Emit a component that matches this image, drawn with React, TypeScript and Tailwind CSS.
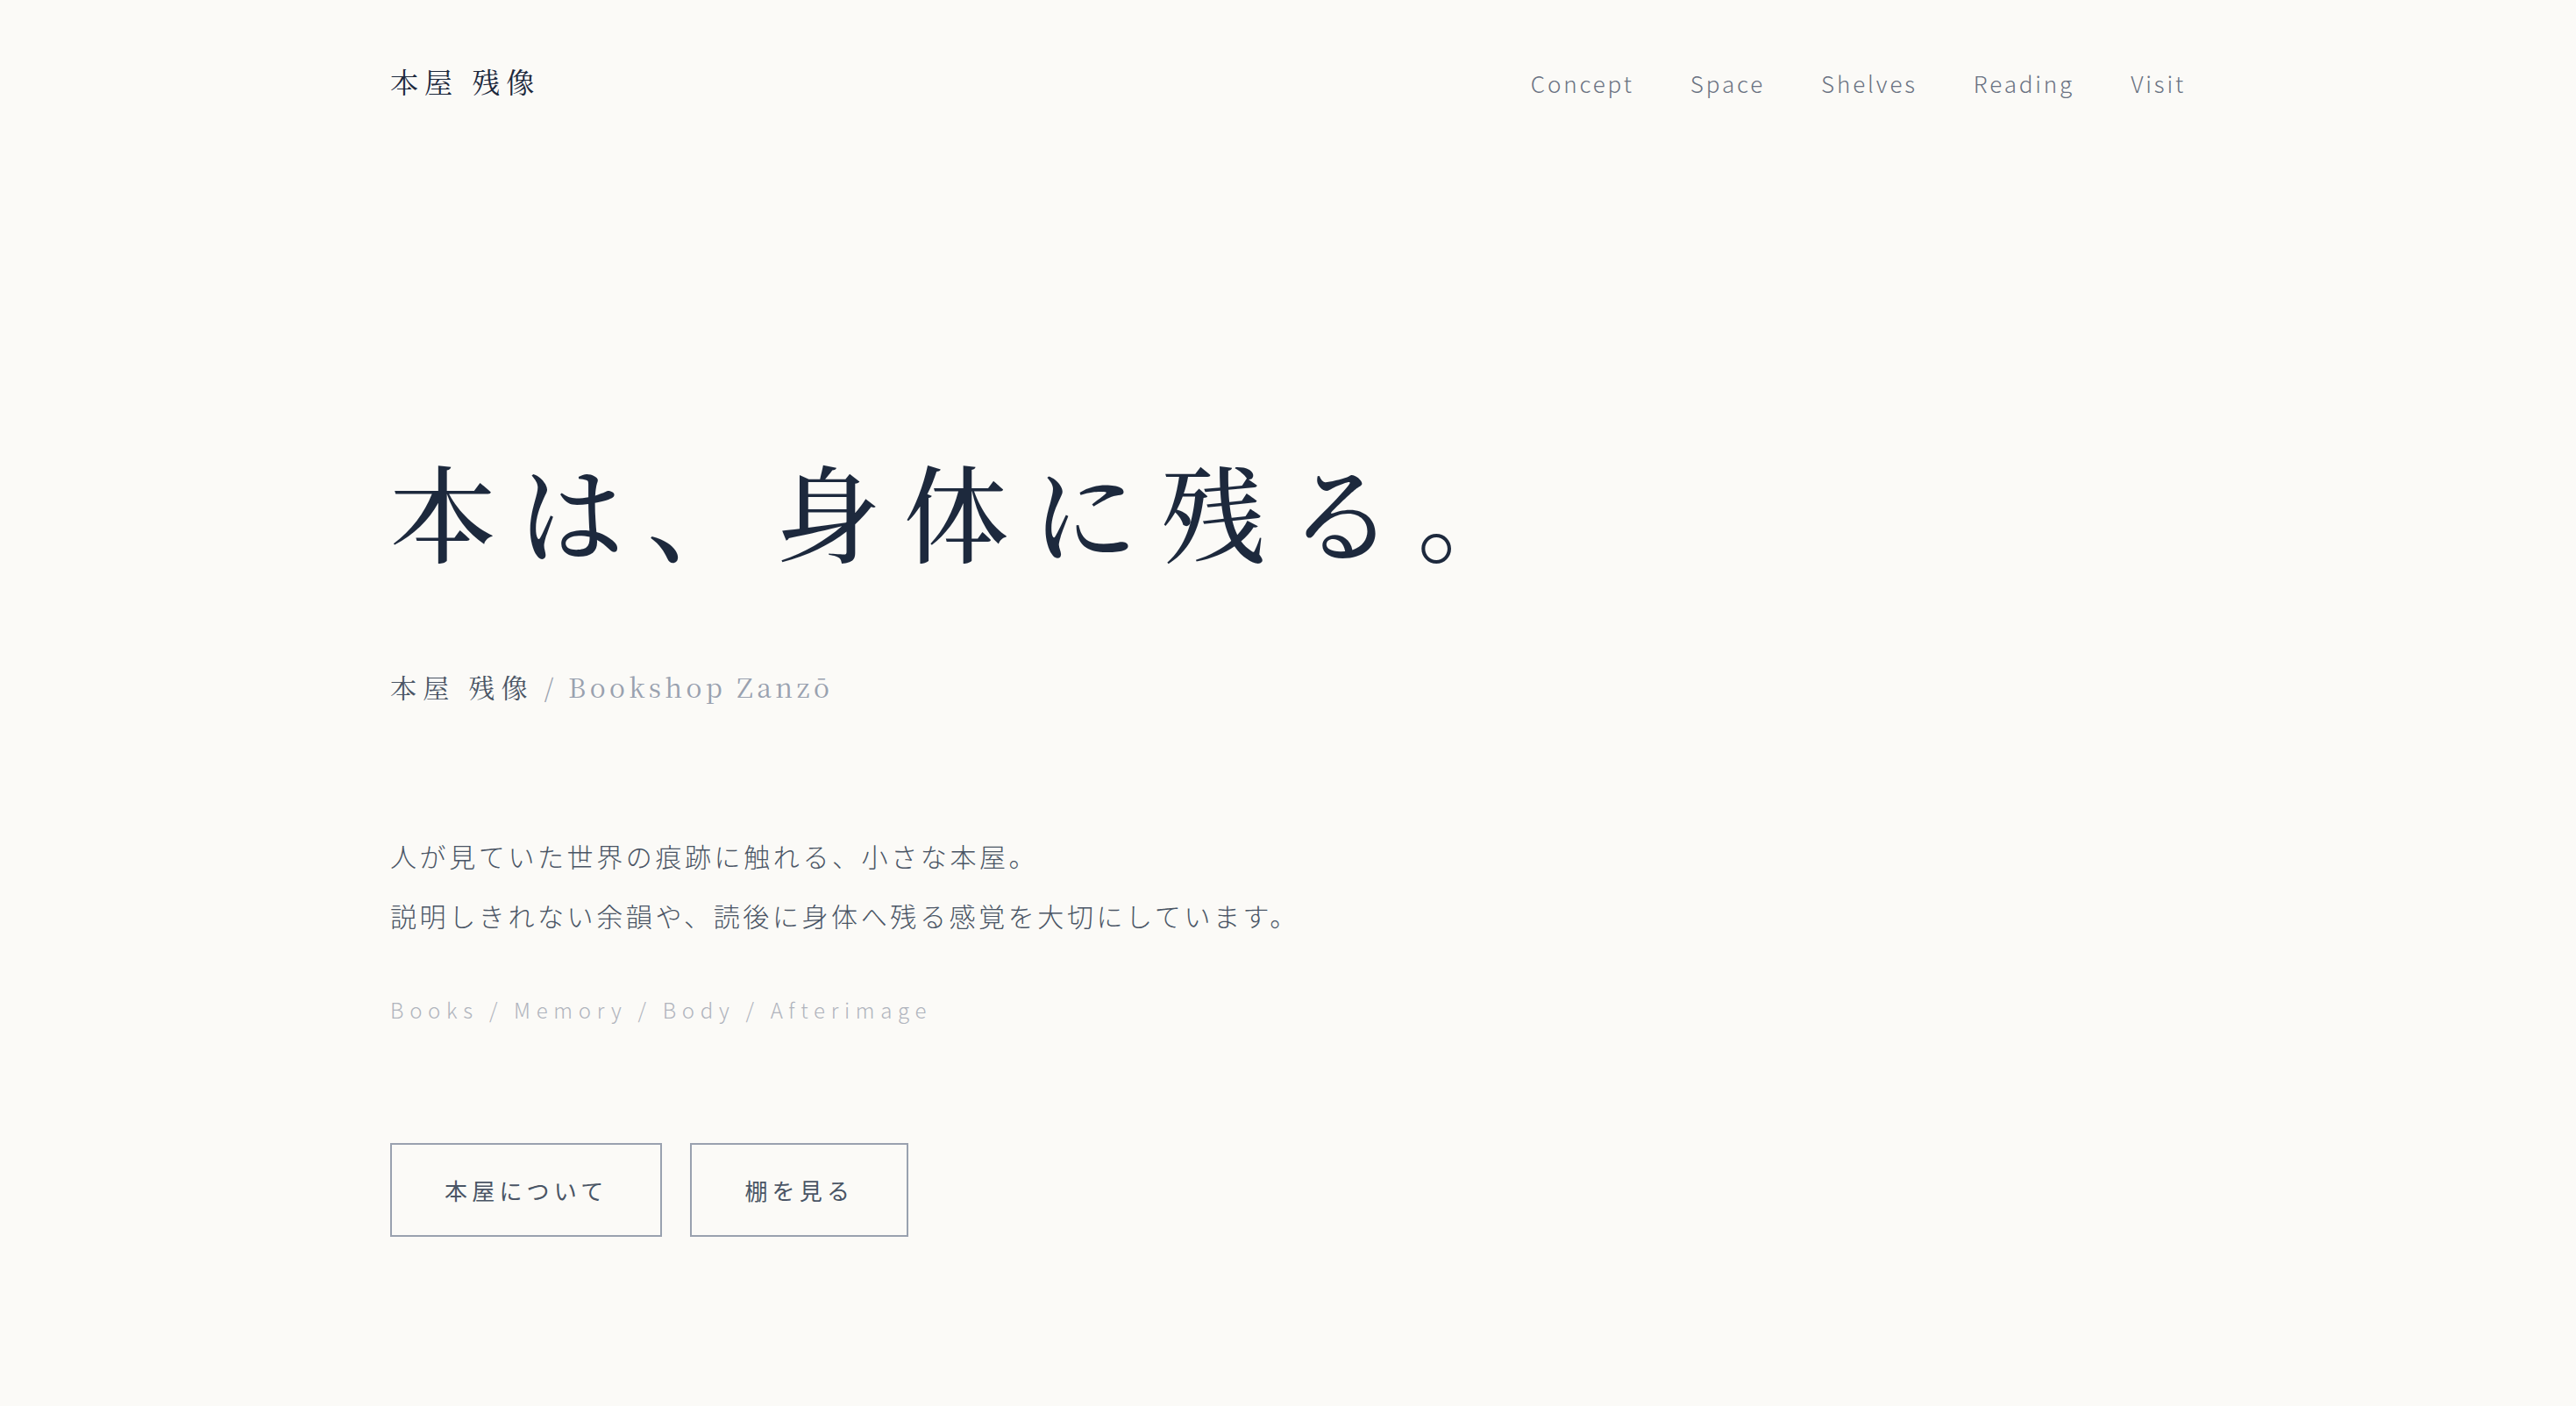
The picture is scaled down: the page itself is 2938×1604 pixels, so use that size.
const navItems = ["Concept", "Space", "Shelves", "Reading", "Visit"];

const serif = "font-['Noto_Serif_CJK_JP','Liberation_Serif','Noto_Sans_CJK_JP',serif]";

export default function App() {
  return (
    <div className="min-h-screen bg-[#fbfaf7] font-['Noto_Sans_CJK_JP','Noto_Sans',sans-serif] text-slate-800">
      <div className="mx-auto max-w-[2048px]">
        <header className="flex items-baseline justify-between pt-[68px]">
          <a href="#" className={`${serif} text-[32px] leading-[48px] tracking-[0.22em] text-slate-800`}>
            本屋 残像
          </a>
          <nav className="flex gap-16 text-[26px] font-light tracking-[0.11em] text-gray-500">
            {navItems.map((item) => (
              <a key={item} href="#" className="hover:text-slate-800">
                {item}
              </a>
            ))}
          </nav>
        </header>

        <main className="pt-[405px] pb-[190px]">
          <h1 className={`${serif} text-[120px] font-medium leading-none tracking-[0.22em] text-slate-800`}>
            本は、身体に残る。
          </h1>

          <p className={`${serif} mt-[120px] text-[30px] leading-[45px]`}>
            <span className="tracking-[0.24em] text-gray-600">本屋 残像</span>
            <span className="tracking-[0.15em] text-gray-400"> / Bookshop Zanzō</span>
          </p>

          <div className="mt-[136px] text-[30px] font-light leading-[68px] tracking-[0.12em] text-gray-600">
            <p>人が見ていた世界の痕跡に触れる、小さな本屋。</p>
            <p>説明しきれない余韻や、読後に身体へ残る感覚を大切にしています。</p>
          </div>

          <p className="mt-[56px] text-[24px] font-light leading-[36px] tracking-[0.28em] text-[#b0b4bd]">
            Books / Memory / Body / Afterimage
          </p>

          <div className="mt-[134px] flex gap-8">
            <a
              href="#"
              className="border-2 border-gray-400 px-[60px] py-8 text-[26px] leading-[39px] tracking-[0.2em] text-gray-600 hover:bg-white"
            >
              本屋について
            </a>
            <a
              href="#"
              className="border-2 border-gray-400 px-[60px] py-8 text-[26px] leading-[39px] tracking-[0.2em] text-gray-600 hover:bg-white"
            >
              棚を見る
            </a>
          </div>
        </main>
      </div>
    </div>
  );
}
